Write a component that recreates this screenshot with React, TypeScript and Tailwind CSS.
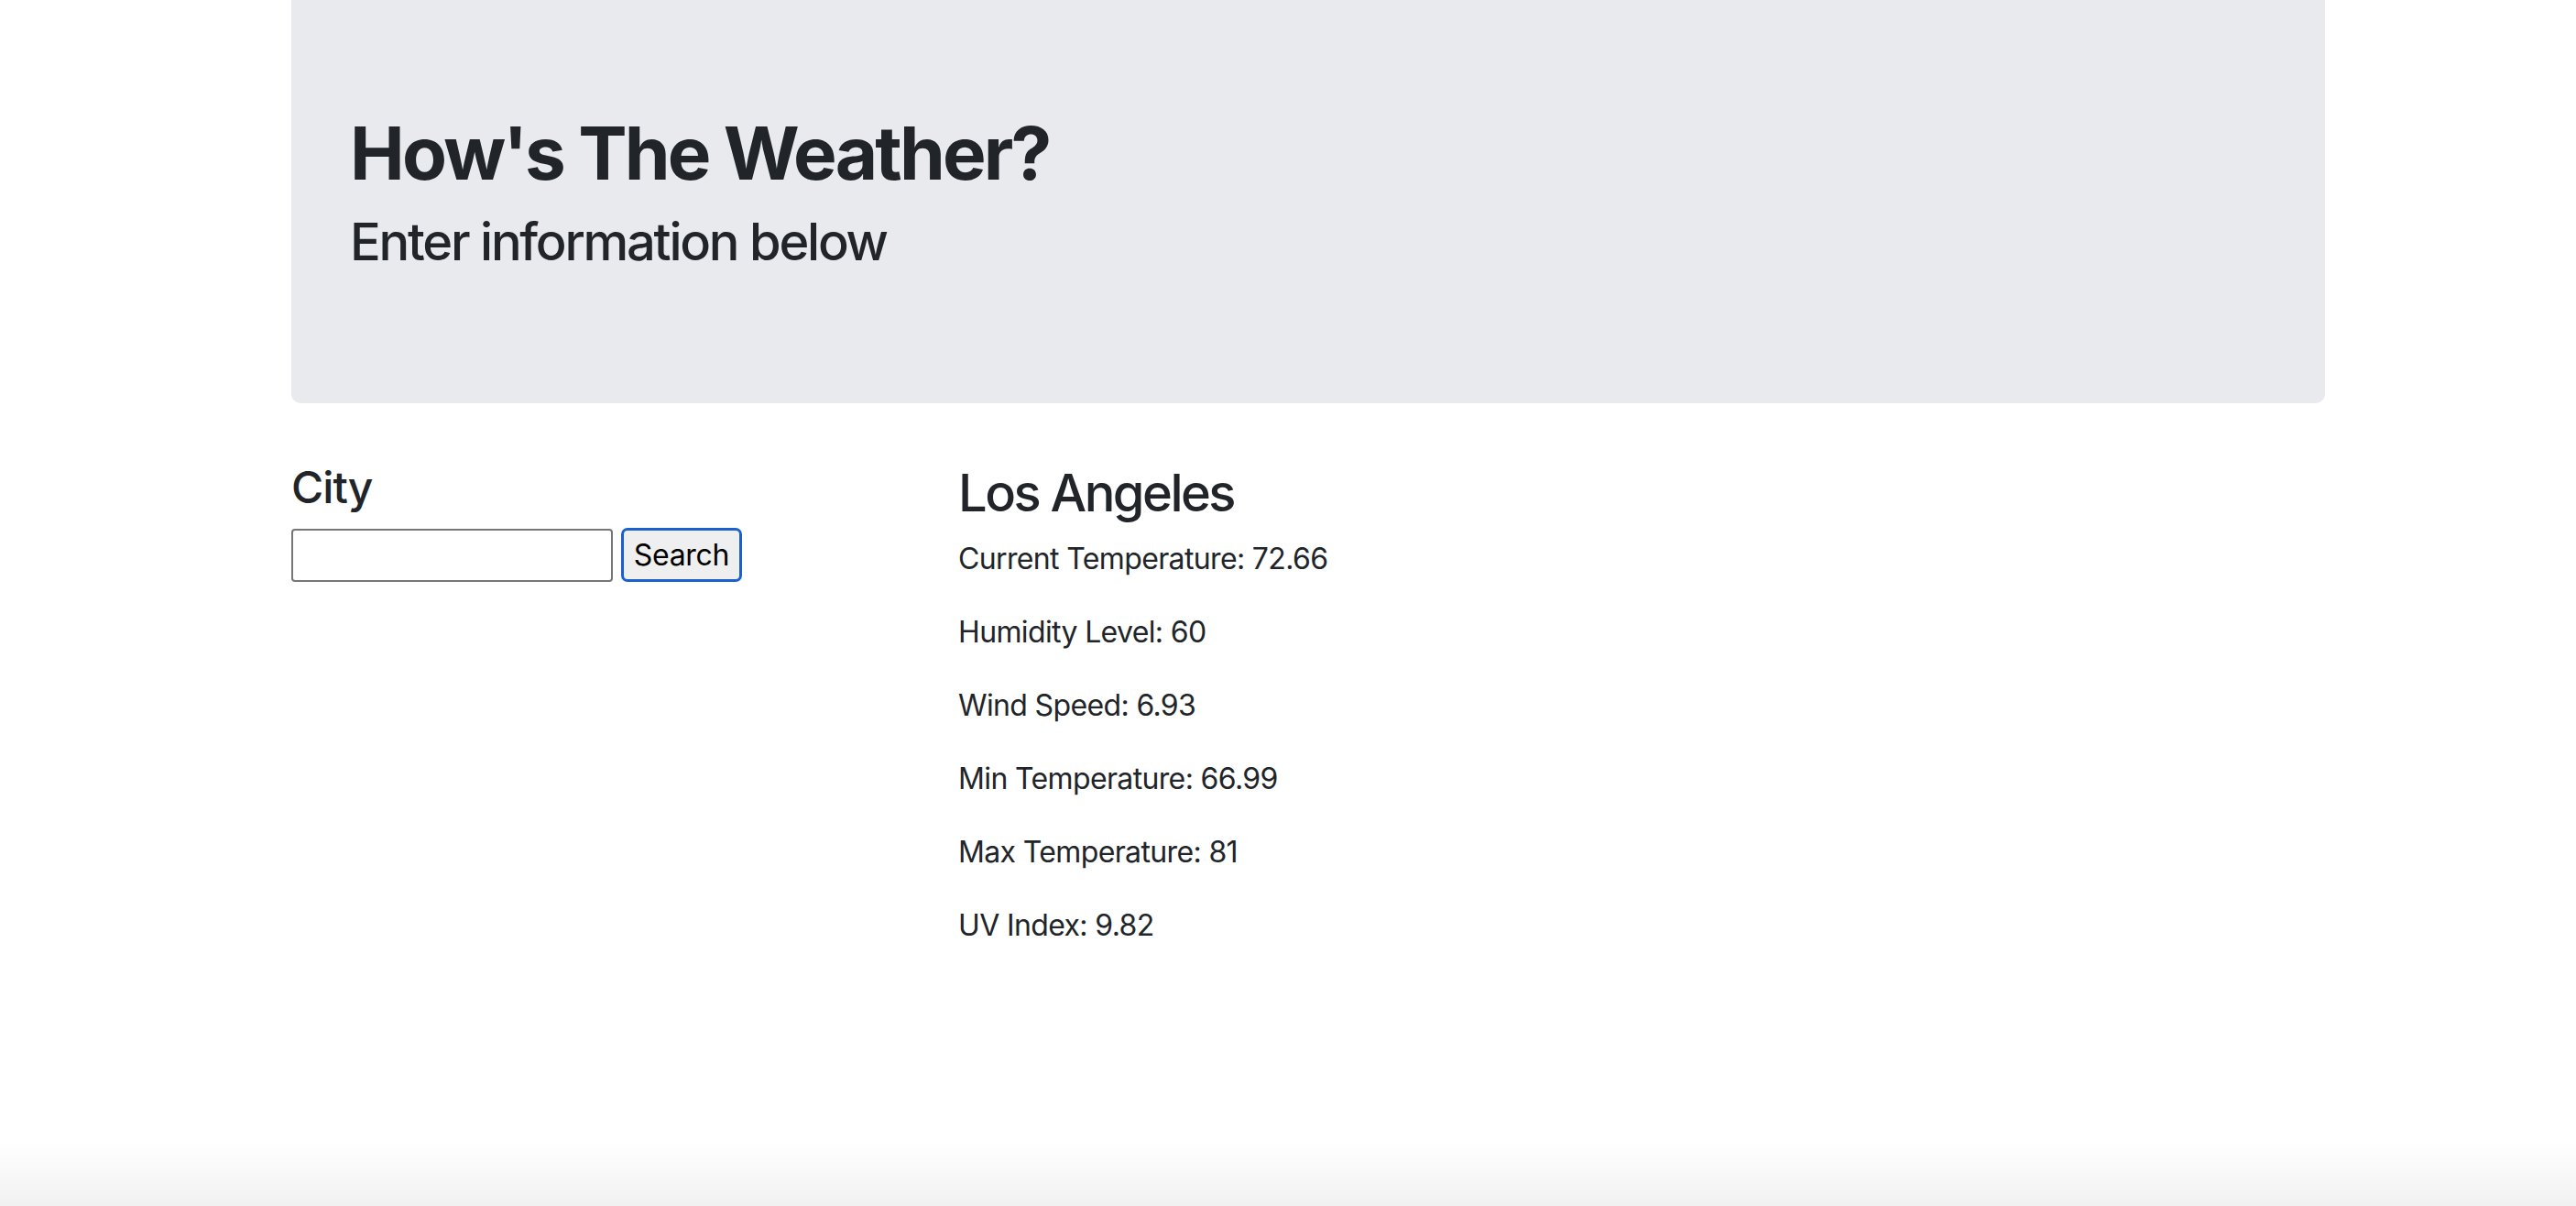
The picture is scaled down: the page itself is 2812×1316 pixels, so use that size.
import React from 'react';

const readings = [
  { label: 'Current Temperature', value: '72.66' },
  { label: 'Humidity Level', value: '60' },
  { label: 'Wind Speed', value: '6.93' },
  { label: 'Min Temperature', value: '66.99' },
  { label: 'Max Temperature', value: '81' },
  { label: 'UV Index', value: '9.82' },
];

const App: React.FC = () => {
  return (
    <div className="h-[1316px] flex flex-col bg-white text-[#212529] font-[Inter,'Noto_Sans',sans-serif]">
      <div className="pl-[318px]">
        <div className="w-[2220px] h-[440px] bg-[#e9eaee] rounded-b-[10px] px-[64px] pt-[119px]">
          <h1 className="text-[80px] leading-[96px] font-bold tracking-[-0.035em] mb-[16px]">How's The Weather?</h1>
          <h3 className="text-[56px] leading-[67px] font-medium tracking-[-0.04em]">Enter information below</h3>
        </div>

        <div className="flex mt-[63px]">
          <div className="w-[728px]">
            <label className="block text-[48px] leading-[58px] font-medium tracking-[-0.02em] mb-[15px]">City</label>
            <div className="flex items-center gap-[9px]">
              <input type="text" className="w-[351px] h-[58px] border-2 border-[#767676] rounded-[4px] bg-white px-2 text-[32px] outline-none" />
              <button className="w-[132px] h-[59px] border-[3px] border-[#1b60cf] rounded-[7px] bg-[#efefef] text-[32px] text-black tracking-[-0.01em] flex items-center justify-center">
                Search
              </button>
            </div>
          </div>

          <div className="pt-[2px]">
            <h3 className="text-[56px] leading-[67px] font-medium tracking-[-0.045em] mb-[14px]">Los Angeles</h3>
            {readings.map((r) => (
              <p key={r.label} className="text-[32px] leading-[48px] tracking-[-0.02em] mb-[32px]">
                {r.label}: {r.value}
              </p>
            ))}
          </div>
        </div>
      </div>

      <div className="mt-auto h-[70px] bg-linear-to-b from-white to-[#f1f1f1]" />
    </div>
  );
};

export default App;
